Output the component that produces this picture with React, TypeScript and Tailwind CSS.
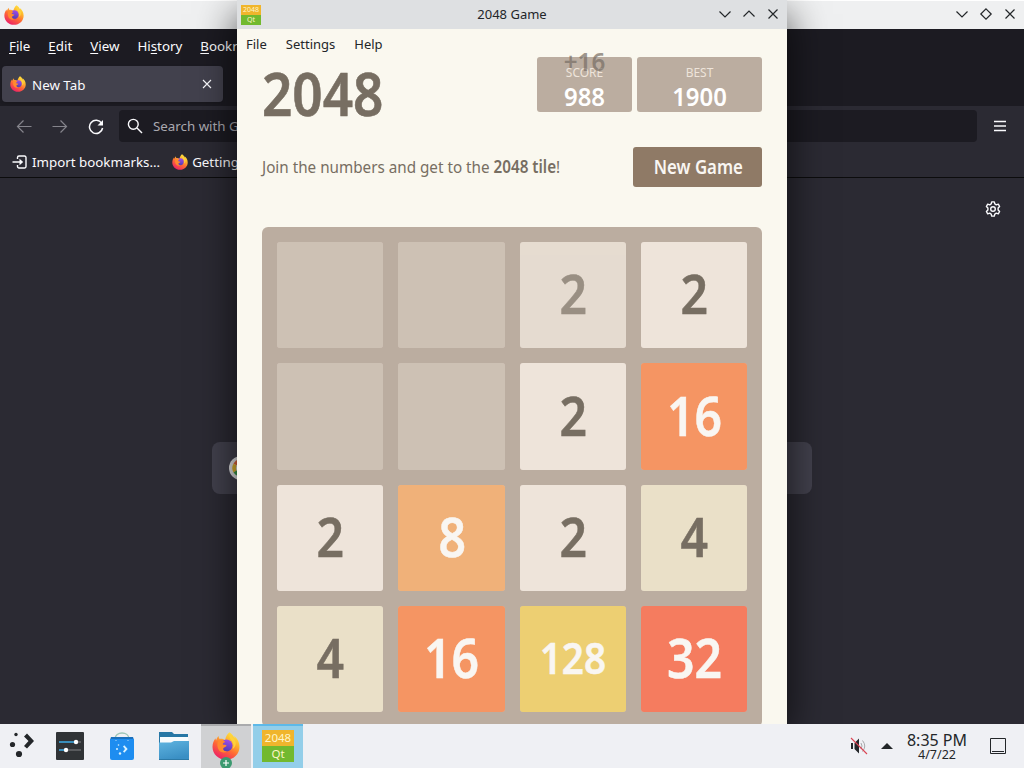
import React, { useId } from 'react';
import clsx from 'clsx';

type IconProps = { className?: string };

const FirefoxLogo = ({ className }: IconProps) => {
  const id = useId();
  return (
    <svg viewBox="0 0 28 28" className={className}>
      <defs>
        <linearGradient id={`${id}a`} x1="0.85" y1="0.05" x2="0.3" y2="1">
          <stop offset="0" stopColor="#ffe845" />
          <stop offset="0.3" stopColor="#ffb62c" />
          <stop offset="0.6" stopColor="#ff6a35" />
          <stop offset="1" stopColor="#ec1f68" />
        </linearGradient>
        <linearGradient id={`${id}b`} x1="0.6" y1="0" x2="0.3" y2="1">
          <stop offset="0" stopColor="#a04bea" />
          <stop offset="1" stopColor="#4b3fb0" />
        </linearGradient>
      </defs>
      <path
        fill={`url(#${id}a)`}
        d="M17.5 0.3c2.8 1.8 4.3 4 4.9 6.1c0-.8 0-1.600-.3-2.300c3.200 2.300 5.400 6.200 5.400 10.800c0 7.200-6 12.800-13.500 12.800S.5 22 .5 14.900c0-3.700 1.400-6.500 3-8.600c.1 1 .3 1.500.6 2.100c.4-1.800 1.300-3.300 2.500-4.500c0 1.300.4 2.300 1.100 3.100c2.100-.6 4 .2 5.300 1.200c.7-3.300 2.300-6.200 4.500-7.900z"
      />
      <circle cx="14.500" cy="13.500" r="6" fill={`url(#${id}b)`} />
      <path fill="#ff8a2e" d="M6 9.500c2.800-1.900 5.600-1.200 7.400.6c-2 .4-2.600 1.600-2.600 2.500c1.300.3 2.800.1 3.900 1.200c-.8 1.300-2.400 1.300-3.200 2.200c-1 1.500.7 3.500 3.700 3.300c-2.800 2.300-7.200 1.200-8.800-2.100C5.200 14.700 5 11.700 6 9.500z" />
      <path fill="#ffd23d" d="M17.500 2c-.8 2.600.6 4.800 2.200 6.700c1.900 2.400 2.300 5.300.9 8.200c3.100-1.800 3.900-5.400 2.500-8.500C22 6 19.200 4.500 17.500 2z" />
    </svg>
  );
};

const Stroke = ({ d, className, w = 1.2 }: { d: string; className: string; w?: number }) => (
  <svg viewBox="0 0 16 16" className={className} fill="none" stroke="currentColor" strokeWidth={w}>
    <path d={d} />
  </svg>
);

const DOWN = 'M2.500 5.500 8 11l5.500-5.500';
const UP = 'M2.500 10.500 8 5l5.500 5.500';
const CLOSE = 'M3.500 3.500l9 9M12.500 3.500l-9 9';
const SMALL_CLOSE = 'M4 4l8 8M12 4l-8 8';
const DIAMOND = 'M8 2.800 13.200 8 8 13.200 2.800 8z';

const AppBadge = ({ small }: { small?: boolean }) => (
  <div className={clsx('flex flex-col text-center text-[#fff5c8] overflow-hidden', small ? 'w-5 h-5 text-[7px] leading-[10px]' : 'w-8 h-8 text-[11.500px] leading-4')}>
    <div className="flex-1 bg-[#f0b52c]">2048</div>
    <div className="flex-1 bg-[#72b92f]">Qt</div>
  </div>
);

const menus = [
  ['F', 'ile', ''],
  ['E', 'dit', ''],
  ['V', 'iew', ''],
  ['s', 'tory', 'Hi'],
  ['B', 'ookr', ''],
];

const Browser = () => (
  <div className="w-full h-[724px] flex flex-col bg-[#2b2a33] text-[#fbfbfe] text-[13.330px]">
    <div className="h-[29px] shrink-0 flex items-center bg-[#eff0f1] border-t border-white text-[#232629] pl-1 pr-1.5">
      <FirefoxLogo className="w-5 h-5" />
      <div className="ml-auto flex gap-2 -mt-0.5">
        <Stroke d={DOWN} className="w-4 h-4" />
        <Stroke d={DIAMOND} className="w-4 h-4" />
        <Stroke d={CLOSE} className="w-4 h-4" />
      </div>
    </div>
    <div className="h-[77px] shrink-0 bg-[#1c1b22]">
      <div className="h-[35px] whitespace-nowrap flex items-center gap-[18px] pl-[9px]">
        {menus.map(([key, rest, lead]) => (
          <span key={key}>
            {lead}
            <u className="underline-offset-2">{key}</u>
            {rest}
          </span>
        ))}
      </div>
      <div className="ml-0.5 mt-[2px] w-[221px] h-9 rounded bg-[#42414d] flex items-center pl-2 pr-2 shadow">
        <FirefoxLogo className="w-4 h-4" />
        <span className="ml-1.5 mt-[3px]">New Tab</span>
        <Stroke d={SMALL_CLOSE} w={1.100} className="w-4 h-4 ml-auto" />
      </div>
    </div>
    <div className="h-10 shrink-0 flex items-center pl-4 pr-4">
      <Stroke d="M15.500 8.500H1.500M7.500 2.500l-6 6 6 6" className="w-4 h-4 text-[#85848c]" />
      <Stroke d="M.5 8.500h14M8.500 2.500l6 6-6 6" className="w-4 h-4 ml-5 text-[#85848c]" />
      <svg viewBox="0 0 16 16" className="w-4 h-4 ml-5 mt-0.5" fill="none" stroke="currentColor" strokeWidth="1.500">
        <path d="M13.700 4.400A6.600 6.600 0 1 0 14.600 9" />
        <path d="M15 1v5.500H9.500z" fill="currentColor" stroke="none" />
      </svg>
      <div className="ml-[15px] w-[858px] h-8 rounded bg-[#1c1b22] flex items-center pl-2">
        <svg viewBox="0 0 16 16" className="w-4 h-4" fill="none" stroke="currentColor" strokeWidth="1.400">
          <circle cx="6.300" cy="6.300" r="4.900" />
          <path d="M10 10l5 5" />
        </svg>
        <span className="ml-[10px] mt-px text-[#aaa9b0] whitespace-nowrap">Search with G</span>
      </div>
      <Stroke d="M2 3.500h12M2 8h12M2 12.500h12" w={1.300} className="w-4 h-4 ml-auto" />
    </div>
    <div className="h-8 shrink-0 flex items-center pl-3 border-b border-[#0c0c0d]">
      <svg viewBox="0 0 16 16" className="w-4 h-4" fill="none" stroke="currentColor" strokeWidth="1.400">
        <path d="M5.500 5V3.500a1.500 1.500 0 0 1 1.500-1.500h5.500a1.500 1.500 0 0 1 1.500 1.500v9a1.500 1.500 0 0 1-1.500 1.500H7a1.500 1.500 0 0 1-1.500-1.500V11M.5 8H10" />
        <path d="M7.500 4.800 11.200 8l-3.700 3.200z" fill="currentColor" stroke="none" />
      </svg>
      <span className="ml-1 mt-0.5">Import bookmarks...</span>
      <FirefoxLogo className="w-4 h-4 ml-3" />
      <span className="ml-1 mt-0.5">Getting</span>
    </div>
    <div className="flex-1 flex flex-col items-center">
      <svg viewBox="0 0 16 16" className="w-4 h-4 mt-[23px] mr-[23px] self-end" fill="none" stroke="currentColor" strokeWidth="1.400" strokeLinejoin="round">
        <path d="M6.700.9h2.600l.5 2 1.500.9 2-.6 1.300 2.300-1.500 1.500v2l1.500 1.500-1.300 2.300-2-.6-1.500.9-.5 2H6.700l-.5-2-1.500-.9-2 .6-1.300-2.300L2.900 9V7L1.400 5.500l1.300-2.300 2 .6 1.500-.9z" />
        <circle cx="8" cy="8" r="2.300" />
      </svg>
      <div className="mt-[225px] w-[600px] h-[52px] rounded-lg bg-[#42414d] flex items-center pl-[17px]">
        <svg viewBox="0 0 24 24" className="w-6 h-6">
          <circle cx="12" cy="12" r="12" fill="#e4e4e6" />
          <g fill="none" strokeWidth="3.500">
            <path d="M6 8.500A7 7 0 0 1 17 7" stroke="#e8683b" />
            <path d="M6 8.500a7 7 0 0 0 0 7" stroke="#e5b72d" />
            <path d="M6 15.500a7 7 0 0 0 10 2" stroke="#3f9d4d" />
            <path d="M12 12h7a7 7 0 0 1-3 5.500" stroke="#4285f4" />
          </g>
        </svg>
      </div>
    </div>
  </div>
);

const tileStyles: Record<number, string> = {
  0: 'bg-[#cdc1b4]',
  2: 'bg-[#eee4da] text-[#776e62] text-[53.500px]',
  4: 'bg-[#eae0c8] text-[#776e62] text-[53.500px]',
  8: 'bg-[#f0b179] text-[#f9f6f2] text-[53.500px]',
  16: 'bg-[#f59563] text-[#f9f6f2] text-[53.500px]',
  32: 'bg-[#f57c5f] text-[#f9f6f2] text-[53.500px]',
  128: 'bg-[#edcf72] text-[#f9f6f2] text-[43px]',
};

const board = [0, 0, 2, 2, 0, 0, 2, 16, 2, 8, 2, 4, 4, 16, 128, 32];

// index of the tile that is still fading in
const appearing = 2;

const Tile = ({ value, fading }: { value: number; fading: boolean }) => (
  <div className="rounded-[3px] bg-[#cdc1b4]">
    <div className={clsx('w-full h-full rounded-[3px] pb-0.5 pl-px flex items-center justify-center font-semibold leading-none [-webkit-text-stroke:0.5px]', tileStyles[value], fading && 'opacity-75')}>
      {value > 0 && <span className={clsx('scale-x-90', fading && 'opacity-85')}>{value}</span>}
    </div>
  </div>
);

const ScoreBox = ({ label, value, className }: { label: string; value: number; className: string }) => (
  <div className={clsx('h-[55px] rounded-[3px] bg-[#bbada0] text-center', className)}>
    <div className="pt-[7px] text-[13px] leading-[17px] text-[#eee4da] scale-x-[0.92]">{label}</div>
    <div className="text-[26px] leading-[30px] font-semibold scale-x-[0.92] text-white">{value}</div>
  </div>
);

const GameWindow = () => (
  <div className="absolute left-[237px] top-0 w-[550px] h-[724px] overflow-hidden bg-[#faf8ef] flex flex-col">
    <div className="h-[29px] shrink-0 grid grid-cols-3 items-center bg-[#dee0e2] pl-1 pr-1.5 text-[#232629] text-[13px]">
      <AppBadge small />
      <span className="text-center pl-0.5">2048 Game</span>
      <div className="flex gap-2 justify-end -mt-0.5">
        <Stroke d={DOWN} className="w-4 h-4" />
        <Stroke d={UP} className="w-4 h-4" />
        <Stroke d={CLOSE} className="w-4 h-4" />
      </div>
    </div>
    <div className="h-7 shrink-0 flex items-center gap-[19px] pl-[9px] pt-1 text-[13px] text-[#232629]">
      <span>File</span>
      <span>Settings</span>
      <span>Help</span>
    </div>
    <div className="px-[25px] flex flex-col text-[#776e62]">
      <div className="h-[90px] flex">
        <h1 className="text-[59px] leading-[72px] font-semibold origin-left scale-x-90 [-webkit-text-stroke:0.6px]">2048</h1>
        <div className="ml-auto flex gap-[5px]">
          <div className="relative">
            <ScoreBox label="SCORE" value={988} className="w-[95px]" />
            <div className="absolute -top-[11px] left-0 w-full text-center text-[26px] leading-[30px] font-semibold scale-x-[0.93] text-[#776e65] opacity-70">+16</div>
          </div>
          <ScoreBox label="BEST" value={1900} className="w-[125px]" />
        </div>
      </div>
      <div className="h-20 flex justify-between">
        <p className="w-[320px] text-[17px] leading-10 origin-left scale-x-[0.896] whitespace-nowrap">
          Join the numbers and get to the <b className="font-semibold">2048 tile</b>!
        </p>
        <button className="w-[129px] h-10 rounded-[3px] bg-[#8f7a66] text-[#f9f6f2] text-[19px] font-semibold">
          <span className="inline-block pl-px scale-x-[0.885] whitespace-nowrap">New Game</span>
        </button>
      </div>
      <div className="h-[500px] shrink-0 rounded-md bg-[#bbada0] p-[15px] grid grid-cols-4 grid-rows-4 gap-[15px]">
        {board.map((value, i) => (
          <Tile key={i} value={value} fading={i === appearing} />
        ))}
      </div>
    </div>
  </div>
);

const Taskbar = () => (
  <div className="relative h-11 flex items-center bg-[#eff0f4] text-[#232629]">
    <svg viewBox="0 0 32 32" className="w-8 h-8 ml-1.5" fill="#232629">
      <circle cx="10" cy="4.500" r="1.700" />
      <circle cx="6.500" cy="14.500" r="2.600" />
      <circle cx="13" cy="24" r="3.100" />
      <path d="M18 6.500 21 3.500l7 7.500-7 7.500-3-2.500 4.500-5z" />
    </svg>
    <svg viewBox="0 0 28 28" className="w-7 h-7 ml-[18px]">
      <rect width="28" height="28" rx="1" fill="#303336" />
      <path d="M3 10h17" stroke="#3daee9" strokeWidth="1.500" />
      <path d="M20 10h5M10 18h15" stroke="#67696c" strokeWidth="1.500" />
      <path d="M3 18h7" stroke="#3daee9" strokeWidth="1.500" />
      <circle cx="20" cy="10" r="2.200" fill="#fff" />
      <circle cx="10" cy="18" r="2.200" fill="#fff" />
    </svg>
    <svg viewBox="0 0 24 28" className="w-6 h-7 ml-[26px]">
      <path d="M5 7C5-1 19-1 19 7" fill="none" stroke="#9cc5b6" strokeWidth="1.400" />
      <path d="M1 5h22l1 3H0z" fill="#1a70bd" />
      <path d="M0 7h24v19a2 2 0 0 1-2 2H2a2 2 0 0 1-2-2z" fill="#1e8df0" />
      <g fill="#d9f2ff">
        <circle cx="8.500" cy="13" r=".8" />
        <circle cx="7" cy="17" r="1" />
        <circle cx="10" cy="21.500" r="1.200" />
        <circle cx="6" cy="8.500" r=".5" />
        <circle cx="18" cy="8.500" r=".5" />
        <path d="m13 14.500 1.300-1.200 3.400 3.700-3.400 3.700-1.300-1.200 2-2.500z" />
      </g>
    </svg>
    <svg viewBox="0 0 30 28" className="w-[30px] h-7 ml-[25px]">
      <defs>
        <linearGradient id="folder" x1="0" y1="0" x2="0.4" y2="1">
          <stop offset="0" stopColor="#5fb4e0" />
          <stop offset="1" stopColor="#3a8fc4" />
        </linearGradient>
      </defs>
      <path d="M0 0h13l2 2h14v12H0z" fill="#2777a5" />
      <path d="M1 5h28v8H1z" fill="#f7fbfd" />
      <path d="M0 10.500h12l3-1.500h15v19H0z" fill="url(#folder)" />
      <path d="M0 27h30v1H0z" fill="#2c79a6" />
    </svg>
    <div className="relative ml-3 w-[50px] h-full bg-[#d0d1d3] border-t-2 border-[#aaabad] flex justify-center">
      <FirefoxLogo className="w-7 h-7 mt-[6px]" />
      <svg viewBox="0 0 12 12" className="absolute left-[19px] top-[31px] w-3 h-3">
        <circle cx="6" cy="6" r="6" fill="#3c9a70" />
        <path d="M6 3v6M3 6h6" stroke="#fff" strokeWidth="1.200" />
      </svg>
    </div>
    <div className="ml-0.5 w-[50px] h-full bg-[#93cee9] border-t-2 border-[#5db9e8] flex justify-center pt-1">
      <AppBadge />
    </div>
    <svg viewBox="0 0 18 18" className="w-[18px] h-[18px] ml-auto" fill="none">
      <path d="M1 6h2v6H1zM4.500 6 9 1.500v15L4.500 12z" fill="#232629" />
      <path d="M11 6q2 3 0 6M12.500 3.500q4.500 5.500 0 11" stroke="#a7a9ab" />
      <path d="M1 1l16 16" stroke="#da4453" strokeWidth="1.100" />
    </svg>
    <svg viewBox="0 0 12 6" className="w-3 h-1.5 ml-[13px]" fill="#232629">
      <path d="M0 6 6 0l6 6z" />
    </svg>
    <div className="ml-[13px] w-[62px] text-center whitespace-nowrap">
      <div className="text-[16px] leading-[17px]">8:35 PM</div>
      <div className="text-[12.500px] leading-3">4/7/22</div>
    </div>
    <svg viewBox="0 0 16 16" className="w-4 h-4 ml-[22px] mr-[18px]" fill="none" stroke="#232629">
      <path d="M.5.5h15v15H.5zM2 13.500h12" />
    </svg>
  </div>
);

// darkens the browser next to the game window's edges
const WindowShadow = () => (
  <div className="absolute left-[237px] top-2 w-[550px] h-[716px] shadow-[0_8px_36px_2px_rgba(0,0,0,0.65)]" />
);

const App = () => (
  <div className="relative w-[1024px] h-[768px] overflow-hidden font-['Noto_Sans',sans-serif]">
    <Browser />
    <WindowShadow />
    <GameWindow />
    <Taskbar />
  </div>
);

export default App;
